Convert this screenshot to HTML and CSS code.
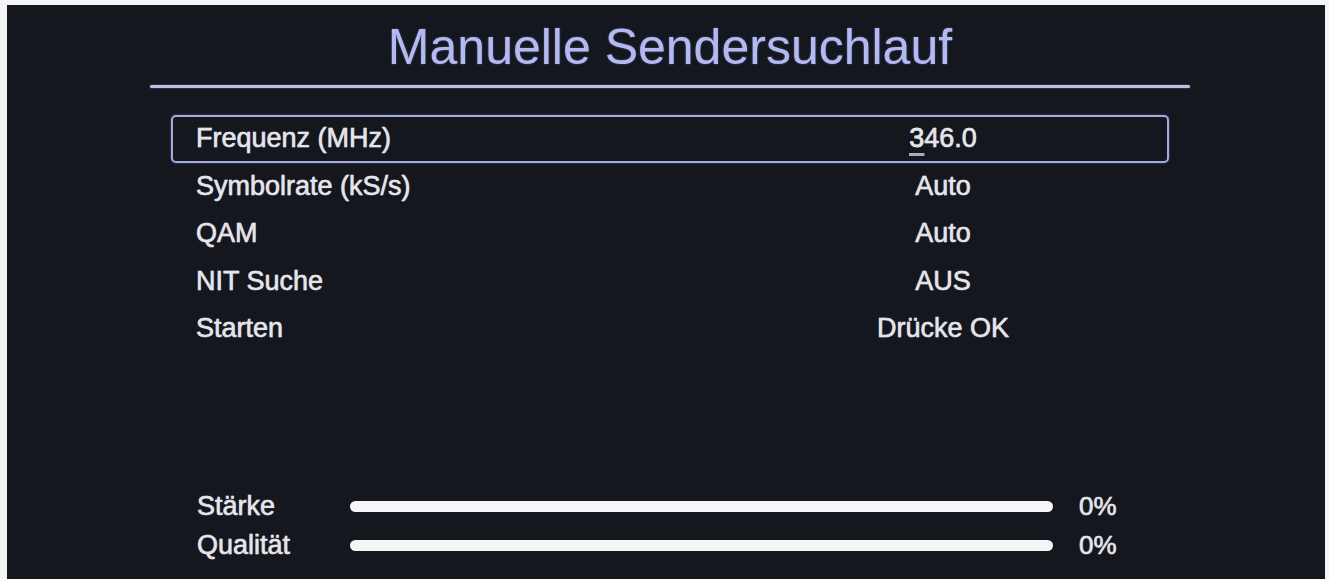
FILE: index.html
```html
<!DOCTYPE html>
<html>
<head>
    <title>Manuelle Sendersuchlauf</title>
    <link rel="stylesheet" href="styles.css">
</head>
<body>

    <div class="screen">
        <h1 class="title">Manuelle Sendersuchlauf</h1>
        <div class="divider"></div>

        <div class="menu">
            <div class="row selected">
                <div class="label">Frequenz (MHz)</div>
                <div class="value"><span class="cursor">3</span>46.0</div>
            </div>
            <div class="row">
                <div class="label">Symbolrate (kS/s)</div>
                <div class="value">Auto</div>
            </div>
            <div class="row">
                <div class="label">QAM</div>
                <div class="value">Auto</div>
            </div>
            <div class="row">
                <div class="label">NIT Suche</div>
                <div class="value">AUS</div>
            </div>
            <div class="row">
                <div class="label">Starten</div>
                <div class="value">Drücke OK</div>
            </div>
        </div>

        <div class="signal">
            <div class="meter">
                <div class="meter-label">Stärke</div>
                <div class="bar"></div>
                <div class="percent">0%</div>
            </div>
            <div class="meter">
                <div class="meter-label">Qualität</div>
                <div class="bar"></div>
                <div class="percent">0%</div>
            </div>
        </div>
    </div>

</body>
</html>
```

FILE: styles.css
```css
body {
    margin: 0;
    background-color: #f4f4f6;
    font-family: "Liberation Sans", Arial, sans-serif;
    overflow: hidden;
}

.screen {
    margin: 5px 4px 0 7px;
    height: 574px;
    padding: 0 135px 0 143px;
    background-color: #15171e;
    color: #e4e5ea;
}

.title {
    margin: 0;
    padding-top: 14px;
    font-size: 50px;
    font-weight: normal;
    line-height: 56px;
    text-align: center;
    color: #b3baf2;
    text-shadow: 0 0 2px rgba(150, 160, 240, 0.5);
}

.divider {
    margin-top: 10px;
    height: 3px;
    border-radius: 2px;
    background-color: #bcc0e4;
    box-shadow: 0 0 2px rgba(160, 170, 230, 0.6);
}

.menu {
    margin: 27px 21px 0 21px;
}

.row {
    display: flex;
    align-items: center;
    box-sizing: border-box;
    height: 47.5px;
    border: 2px solid transparent;
    border-radius: 5px;
    font-size: 27px;
    -webkit-text-stroke: 0.4px #e4e5ea;
    text-shadow: 0 0 1px rgba(255, 255, 255, 0.7);
}

.row.selected {
    border-color: #a2aae4;
    box-shadow: 0 0 2px rgba(150, 160, 230, 0.6);
}

.label {
    flex: 0 0 670px;
    box-sizing: border-box;
    padding-left: 23px;
}

.value {
    width: 200px;
    text-align: center;
}

.cursor {
    text-decoration: underline;
    text-decoration-color: #a8acc0;
    text-decoration-thickness: 3px;
    text-underline-offset: 6px;
}

.signal {
    margin-top: 134px;
}

.meter {
    display: flex;
    align-items: center;
    height: 39px;
    padding-left: 47px;
    font-size: 27px;
    -webkit-text-stroke: 0.4px #e4e5ea;
    text-shadow: 0 0 1px rgba(255, 255, 255, 0.7);
}

.meter-label {
    width: 153px;
}

.bar {
    width: 703px;
    height: 11px;
    border-radius: 6px;
    background-color: #f6f6f8;
    -webkit-text-stroke: 0;
}

.percent {
    margin-left: 26px;
    font-size: 26px;
}
```
